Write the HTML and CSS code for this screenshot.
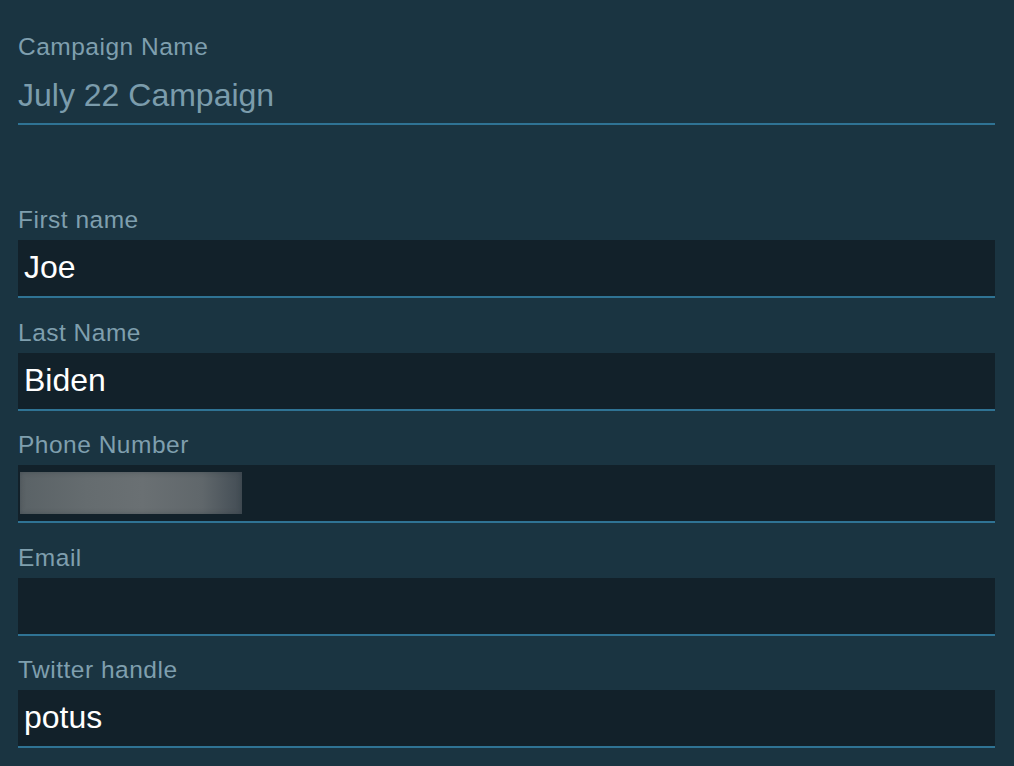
FILE: index.html
```html
<!DOCTYPE html>
<html lang="en">
<head>
<meta charset="utf-8">
<title>Campaign</title>
<link rel="stylesheet" href="styles.css">
</head>
<body>
<main class="form">
  <section class="campaign">
    <div class="label">Campaign Name</div>
    <div class="campaign-value">July 22 Campaign</div>
  </section>
  <section class="fields">
    <div class="field">
      <div class="label">First name</div>
      <div class="box">Joe</div>
    </div>
    <div class="field">
      <div class="label">Last Name</div>
      <div class="box">Biden</div>
    </div>
    <div class="field">
      <div class="label">Phone Number</div>
      <div class="box box-phone"><span class="redacted"></span></div>
    </div>
    <div class="field">
      <div class="label">Email</div>
      <div class="box"></div>
    </div>
    <div class="field">
      <div class="label">Twitter handle</div>
      <div class="box">potus</div>
    </div>
  </section>
</main>
</body>
</html>
```

FILE: styles.css
```css
html, body {
  margin: 0;
  padding: 0;
  background: #1a3441;
  height: 100%;
}

body {
  font-family: "Liberation Sans", Arial, Helvetica, sans-serif;
  overflow: hidden;
}

.form {
  padding: 33px 19px 0 18px;
  display: flex;
  flex-direction: column;
}

.label {
  font-size: 24.5px;
  letter-spacing: 0.5px;
  line-height: 28px;
  color: #7f9fae;
}

.campaign {
  display: flex;
  flex-direction: column;
}

.campaign-value {
  margin-top: 14px;
  height: 40px;
  line-height: 40px;
  padding-bottom: 8px;
  font-size: 32px;
  color: #7b9cac;
  border-bottom: 2px solid #2f7394;
}

.fields {
  margin-top: 81px;
  display: flex;
  flex-direction: column;
  gap: 20.5px;
}

.field {
  display: flex;
  flex-direction: column;
}

.field .label {
  margin-bottom: 6px;
}

.box {
  height: 56px;
  line-height: 55px;
  padding: 0 5px 0 6px;
  background: #12212a;
  border-bottom: 2px solid #2f7394;
  font-size: 32px;
  color: #ffffff;
}

.box-phone {
  display: flex;
  align-items: center;
  padding: 0 2px;
}

.redacted {
  display: block;
  width: 222px;
  height: 42px;
  background: linear-gradient(90deg, #5a6266 0%, #656c6f 30%, #6a7073 55%, #60676b 82%, #434d55 100%);
  box-shadow: inset 0 0 5px rgba(40, 50, 58, 0.4);
}
```
